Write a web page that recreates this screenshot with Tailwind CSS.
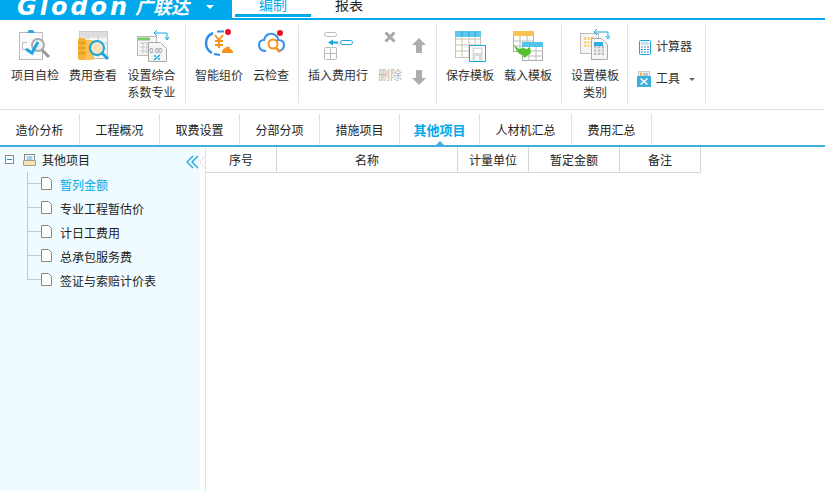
<!DOCTYPE html>
<html lang="zh">
<head>
  <meta charset="UTF-8" />
  <title>Glodon 广联达</title>
  <script src="https://cdn.jsdelivr.net/npm/@tailwindcss/browser@4"></script>
</head>
<body class="w-[825px] h-[491px] overflow-hidden bg-white flex flex-col text-[12px] text-[#333] font-['Liberation_Sans','Noto_Sans_CJK_SC',sans-serif]">

  <!-- Title bar -->
  <div class="h-[20px] shrink-0 flex overflow-hidden border-b-2 border-[#00a9ec]">
    <div class="w-[232px] h-[20px] shrink-0 bg-[#00a9ec] flex items-center text-white overflow-hidden">
      <span class="ml-[17px] w-[117px] font-['DejaVu_Sans'] font-bold italic text-[24px] leading-[14px] tracking-[3px] whitespace-nowrap mt-[-6px]">Glodon</span>
      <span class="ml-[1px] w-[59px] text-[18px] leading-[14px] font-bold italic whitespace-nowrap mt-[-5px]">广联达</span>
      <span class="ml-[12px] mt-[-7px] w-0 h-0 border-x-[4px] border-x-transparent border-t-[4px] border-t-white"></span>
    </div>
    <div class="ml-[3px] w-[76px] h-[17px] border-b-[3px] border-[#00a9ec] text-[#00a9ec] text-[14px] leading-[11px] text-center">编制</div>
    <div class="w-[76px] text-[14px] leading-[11px] text-center text-[#222]">报表</div>
  </div>

  <!-- Ribbon -->
  <div class="h-[90px] shrink-0 flex pl-[6px] pt-[5px] border-b border-[#e2e2e2] text-[#333] text-center leading-[17px]">
    <!-- group 1 -->
    <div class="w-[58px] flex flex-col items-center pt-[2px]">
      <svg class="w-[40px] h-[36px] mb-[5px]" viewBox="0 0 40 36" fill="none">
        <rect x="4.500" y="5.500" width="23" height="27" fill="#fbfbfb" stroke="#bbb"/>
        <path d="M12 6l2-3h4l2 3z" fill="#29a9e0"/>
        <path d="M12 15.500H7.500v7H11" stroke="#bbb"/>
        <circle cx="23" cy="18" r="6" fill="#f2f2f2" stroke="#aaa" stroke-width="2"/>
        <path d="M27 23l7 7" stroke="#999" stroke-width="3"/>
        <path d="M11 22l6 4 6-11" stroke="#1ea5e6" stroke-width="3"/>
      </svg>
      <span>项目自检</span>
    </div>
    <div class="w-[58px] flex flex-col items-center pt-[2px]">
      <svg class="w-[40px] h-[36px] mb-[5px]" viewBox="0 0 40 36" fill="none">
        <rect x="6.500" y="4.500" width="28" height="27" fill="#f7f7f7" stroke="#bbb"/>
        <path d="M6 10h29M6 16h29M6 22h29M15 5v27M25 5v27" stroke="#ccc"/>
        <rect x="6.500" y="4.500" width="28" height="5" fill="#ddd"/>
        <rect x="5" y="11" width="8" height="22" rx="2" fill="#f7b137"/>
        <rect x="12" y="13" width="9" height="20" rx="2" fill="#fbc253"/>
        <path d="M5 16h8M5 21h8M5 26h8" stroke="#d98a14"/>
        <circle cx="24" cy="21" r="7" fill="#fbe3bd" stroke="#16a6dd" stroke-width="2"/>
        <path d="M29 26l6 6" stroke="#16a6dd" stroke-width="3"/>
      </svg>
      <span>费用查看</span>
    </div>
    <div class="w-[59px] flex flex-col items-center pt-[2px]">
      <svg class="w-[40px] h-[36px] mb-[5px]" viewBox="0 0 40 36" fill="none">
        <rect x="5.500" y="9.500" width="19" height="19" fill="#f5f5f5" stroke="#bbb"/>
        <path d="M6 12h12" stroke="#7ec868" stroke-width="3"/>
        <path d="M8 16h10M8 20h10M8 24h10M11 15v12M15 15v12" stroke="#ccc"/>
        <path d="M16.500 15.500h12l6 6v13h-18z" fill="#f5f5f5" stroke="#aaa"/>
        <text x="17.500" y="26" font-size="6.500" fill="#777">0.00</text>
        <path d="M22 33l6-5" stroke="#16a6dd" stroke-width="1.500"/>
        <circle cx="23" cy="29" r="1" fill="#16a6dd"/><circle cx="27" cy="32" r="1" fill="#16a6dd"/>
        <path d="M23 6h12M35 6v6M25 3l-3 3 3 3M33 10l2 3 2-3" stroke="#16a6dd"/>
      </svg>
      <span>设置综合<br>系数专业</span>
    </div>
    <div class="w-[5px] h-[78px] border-r border-[#e2e2e2]"></div>
    <!-- group 2 -->
    <div class="w-[58px] ml-[4px] flex flex-col items-center pt-[2px]">
      <svg class="w-[40px] h-[36px] mb-[5px]" viewBox="0 0 40 36" fill="none">
        <path d="M14 6a11 11 0 0 0-1 20" stroke="#2d8fe6" stroke-width="2.500"/>
        <path d="M15 27l6 1" stroke="#2d8fe6" stroke-width="2"/>
        <path d="M18 4.500h7" stroke="#2d8fe6" stroke-width="2"/>
        <path d="M16 8l4 5 4-5M16 14h8M16 18h8M20 13v8" stroke="#f7941d" stroke-width="2"/>
        <circle cx="29" cy="5" r="3" fill="#ee1122"/>
        <path d="M23 26c0-4 2-4 3-5s5-3 5 1c2 0 3 2 3 4z" fill="#f7941d"/>
      </svg>
      <span>智能组价</span>
    </div>
    <div class="w-[46px] flex flex-col items-center pt-[2px]">
      <svg class="w-[40px] h-[36px] mb-[5px]" viewBox="0 0 40 36" fill="none">
        <g transform="translate(2 -1)">
          <path d="M13 25c-5 0-7-3-7-6s2-5 5-5c1-5 5-7 9-6 3 1 5 3 5 6 4 0 6 2 6 5s-2 6-6 6" stroke="#3d94ec" stroke-width="2.200"/>
          <circle cx="20" cy="18" r="4.500" fill="#fff" stroke="#f7941d" stroke-width="2"/>
          <path d="M23 22l4 4" stroke="#f7941d" stroke-width="2.500"/>
          <circle cx="27" cy="7" r="3" fill="#ee1122"/>
        </g>
      </svg>
      <span>云检查</span>
    </div>
    <div class="w-[5px] h-[78px] border-r border-[#e2e2e2]"></div>
    <!-- group 3 -->
    <div class="w-[70px] ml-[4px] flex flex-col items-center pt-[2px]">
      <svg class="w-[40px] h-[36px] mb-[5px]" viewBox="0 0 40 36" fill="none">
        <rect x="6.500" y="5.500" width="12" height="4" rx="2" stroke="#bbb"/>
        <rect x="22.500" y="13.500" width="12" height="4" rx="2" stroke="#16a6dd"/>
        <path d="M13 15.500h7" stroke="#16a6dd" stroke-width="2"/>
        <path d="M10 15.500l5-3v6z" fill="#16a6dd"/>
        <rect x="6.500" y="20.500" width="12" height="12" rx="1" stroke="#bbb"/>
        <path d="M6.500 26.500h12M12.500 20.500v12" stroke="#bbb"/>
      </svg>
      <span>插入费用行</span>
    </div>
    <div class="w-[34px] flex flex-col items-center pt-[2px] text-[#b5b5b5]">
      <svg class="w-[20px] h-[36px] mb-[5px]" viewBox="0 0 20 36" fill="none">
        <path d="M5.500 5.500l9 9M14.500 5.500l-9 9" stroke="#a8a8a8" stroke-width="3"/>
      </svg>
      <span>删除</span>
    </div>
    <div class="w-[23px] flex flex-col items-center gap-[16px] pt-[12px]">
      <svg class="w-[16px] h-[16px]" viewBox="0 0 16 16"><path d="M8 1l7 7h-4v8H5V8H1z" fill="#adadad"/></svg>
      <svg class="w-[16px] h-[16px]" viewBox="0 0 16 16"><path d="M8 16l7-7h-4V1H5v8H1z" fill="#adadad"/></svg>
    </div>
    <div class="w-[7px] h-[78px] border-r border-[#e2e2e2]"></div>
    <!-- group 4 -->
    <div class="w-[58px] ml-[4px] flex flex-col items-center pt-[2px]">
      <svg class="w-[40px] h-[36px] mb-[5px]" viewBox="0 0 40 36" fill="none">
        <rect x="5.500" y="4.500" width="25" height="26" fill="#fff" stroke="#cdbfae"/>
        <path d="M5 12h26M5 18h26M5 24h26M12 11v20M19 11v20M25 11v20" stroke="#cdbfae"/>
        <rect x="5" y="4" width="26" height="6" fill="#5ccaf0"/>
        <path d="M12 4v6M19 4v6M25 4v6" stroke="#2a9fd0"/>
        <rect x="19.500" y="18.500" width="16" height="16" fill="#fff" stroke="#14a7e0"/>
        <path d="M22.500 20.500h10v13h-10z" fill="#d9d9d9"/>
        <path d="M24 22h7v4h-7z" fill="#fff"/>
        <path d="M25 29h4v4h-4z" fill="#fff"/>
      </svg>
      <span>保存模板</span>
    </div>
    <div class="w-[58px] flex flex-col items-center pt-[2px]">
      <svg class="w-[40px] h-[36px] mb-[5px]" viewBox="0 0 40 36" fill="none">
        <rect x="5.500" y="4.500" width="20" height="20" fill="#fff" stroke="#aaa"/>
        <rect x="5" y="4" width="21" height="5" fill="#fbc253"/>
        <path d="M5 14h21M5 19h21M12 9v16M19 9v16" stroke="#bbb"/>
        <rect x="14.500" y="15.500" width="20" height="18" fill="#fff" stroke="#aaa"/>
        <rect x="14" y="15" width="21" height="5" fill="#52c3ee"/>
        <path d="M14 24h21M14 29h21M21 20v14M28 20v14" stroke="#bbb"/>
        <path d="M6 18l5 4 4-1 4 1 3-2 1 6-7 5-1-3c-4 0-7-4-9-10z" fill="#52c12c"/>
      </svg>
      <span>载入模板</span>
    </div>
    <div class="w-[5px] h-[78px] border-r border-[#e2e2e2]"></div>
    <!-- group 5 -->
    <div class="w-[58px] ml-[4px] flex flex-col items-center pt-[2px]">
      <svg class="w-[40px] h-[36px] mb-[5px]" viewBox="0 0 40 36" fill="none">
        <rect x="5.500" y="6.500" width="18" height="20" fill="#f5f5f5" stroke="#bbb"/>
        <rect x="9" y="10" width="9" height="10" fill="#fbd17a"/>
        <path d="M12 10v10M15 10v10M9 13.500h9M9 17h9" stroke="#fff"/>
        <path d="M16.500 11.500h10l6 6v15h-16z" fill="#f5f5f5" stroke="#aaa"/>
        <rect x="19" y="15" width="9" height="4" fill="#2ab0e6"/>
        <path d="M19 19h10v9H19z" fill="#bbb"/>
        <path d="M22 19v9M26 19v9M19 22h10M19 25h10" stroke="#fff"/>
        <path d="M20 5h13M33 5v5M22 2l-3 3 3 3M31 9l2 3 2-3" stroke="#16a6dd"/>
      </svg>
      <span>设置模板<br>类别</span>
    </div>
    <div class="w-[4px] h-[78px] border-r border-[#e2e2e2]"></div>
    <!-- group 6 -->
    <div class="w-[78px] flex flex-col pl-[9px] pt-[13px] gap-[14px] border-r border-[#e2e2e2] h-[78px] text-left">
      <div class="flex items-center h-[18px] gap-[5px] pl-[2px]">
        <svg class="w-[12px] h-[15px]" viewBox="0 0 12 15" fill="none">
          <rect x="0.500" y="0.500" width="11" height="14" rx="1" fill="#fff" stroke="#14a7e0"/>
          <rect x="2" y="2" width="8" height="3" fill="#bfe6f7"/>
          <path d="M2 7h2M5 7h2M2 9.500h2M5 9.500h2M2 12h2M5 12h2" stroke="#3b8fd0"/>
          <path d="M8 7h2" stroke="#ee3322"/>
          <path d="M8 9.500h2M8 12h2" stroke="#3b8fd0"/>
        </svg>
        <span>计算器</span>
      </div>
      <div class="flex items-center h-[18px] text-[#333]">
        <svg class="w-[14px] h-[16px]" viewBox="0 0 14 16" fill="none">
          <rect x="1.500" y="0.500" width="11" height="7" fill="#eee" stroke="#ccc"/>
          <path d="M3 1.500h2v5H3z" fill="#f2b84b"/>
          <path d="M6 3h5M6 5h5" stroke="#999"/>
          <rect y="5" width="14" height="11" fill="#3caee0"/>
          <path d="M3.500 7.500l7 6M10.500 7.500l-7 6" stroke="#fff" stroke-width="1.500"/>
        </svg>
        <span class="ml-[5px]">工具</span>
        <span class="ml-[9px] w-0 h-0 border-x-[3px] border-x-transparent border-t-[3px] border-t-[#666]"></span>
      </div>
    </div>
  </div>

  <!-- Sheet tabs -->
  <div class="h-[37px] shrink-0 flex pt-[4px] border-b-2 border-[#3fb0e0] text-[#222] text-center leading-[35px]">
    <div class="w-[80px] border-r border-[#e2e2e2]">造价分析</div>
    <div class="w-[80px] border-r border-[#e2e2e2]">工程概况</div>
    <div class="w-[80px] border-r border-[#e2e2e2]">取费设置</div>
    <div class="w-[80px] border-r border-[#e2e2e2]">分部分项</div>
    <div class="w-[80px] border-r border-[#e2e2e2]">措施项目</div>
    <div class="relative w-[80px] border-r border-[#e2e2e2] font-bold text-[13px] leading-[33px] text-[#00a9ec]">
      其他项目
      <span class="absolute left-[36px] bottom-0 w-0 h-0 border-x-[4px] border-x-transparent border-b-[4px] border-b-[#3fb0e0]"></span>
    </div>
    <div class="w-[92px] border-r border-[#e2e2e2]">人材机汇总</div>
    <div class="w-[80px] border-r border-[#e2e2e2]">费用汇总</div>
  </div>

  <!-- Body -->
  <div class="flex-1 flex min-h-0">
    <!-- Tree -->
    <div class="relative w-[206px] shrink-0 border-r border-[#e2e2e2] text-[#222]">
      <div class="w-[200px] h-full bg-[#effbfe]">
        <div class="h-[25px] flex items-center">
          <span class="ml-[5px] w-[9px] h-[9px] border border-[#888] flex items-center justify-center bg-white/60">
            <span class="w-[5px] h-px bg-[#1d8fc4]"></span>
          </span>
          <svg class="ml-[9px] w-[13px] h-[12px]" viewBox="0 0 13 12" fill="none">
            <rect x="1.500" y="0.500" width="10" height="8" fill="#fff" stroke="#888"/>
            <path d="M3.500 3h6M3.500 5h6" stroke="#4aa3d0"/>
            <path d="M0.500 6.500h12v5h-12z" fill="#f7e6b0" stroke="#a99"/>
          </svg>
          <span class="ml-[6px] mt-[3px]">其他项目</span>
        </div>
        <div class="pl-[27px]">
          <div class="flex h-[24px]">
            <span class="w-[14px] h-[24px] border-l border-[#c8c8c8]"><span class="block h-[12px] border-b border-[#c8c8c8]"></span></span>
            <svg class="mt-[5px] w-[11px] h-[13px]" viewBox="0 0 11 13" fill="none"><path d="M.5.500h7l3 3v9H.5z" fill="#fff" stroke="#888"/></svg>
            <span class="ml-[8px] leading-[28px] text-[#00a9ec]">暂列金额</span>
          </div>
          <div class="flex h-[24px]">
            <span class="w-[14px] h-[24px] border-l border-[#c8c8c8]"><span class="block h-[12px] border-b border-[#c8c8c8]"></span></span>
            <svg class="mt-[5px] w-[11px] h-[13px]" viewBox="0 0 11 13" fill="none"><path d="M.5.500h7l3 3v9H.5z" fill="#fff" stroke="#888"/></svg>
            <span class="ml-[8px] leading-[28px]">专业工程暂估价</span>
          </div>
          <div class="flex h-[24px]">
            <span class="w-[14px] h-[24px] border-l border-[#c8c8c8]"><span class="block h-[12px] border-b border-[#c8c8c8]"></span></span>
            <svg class="mt-[5px] w-[11px] h-[13px]" viewBox="0 0 11 13" fill="none"><path d="M.5.500h7l3 3v9H.5z" fill="#fff" stroke="#888"/></svg>
            <span class="ml-[8px] leading-[28px]">计日工费用</span>
          </div>
          <div class="flex h-[24px]">
            <span class="w-[14px] h-[24px] border-l border-[#c8c8c8]"><span class="block h-[12px] border-b border-[#c8c8c8]"></span></span>
            <svg class="mt-[5px] w-[11px] h-[13px]" viewBox="0 0 11 13" fill="none"><path d="M.5.500h7l3 3v9H.5z" fill="#fff" stroke="#888"/></svg>
            <span class="ml-[8px] leading-[28px]">总承包服务费</span>
          </div>
          <div class="flex h-[24px]">
            <span class="w-[14px] h-[12px] border-l border-b border-[#c8c8c8]"></span>
            <svg class="mt-[5px] w-[11px] h-[13px]" viewBox="0 0 11 13" fill="none"><path d="M.5.500h7l3 3v9H.5z" fill="#fff" stroke="#888"/></svg>
            <span class="ml-[8px] leading-[28px]">签证与索赔计价表</span>
          </div>
        </div>
      </div>
      <!-- collapse handle -->
      <svg class="absolute left-[186px] top-[8px] w-[19px] h-[14px]" viewBox="0 0 19 14" fill="none">
        <path d="M7 1L1 7l6 6M12 1L6 7l6 6" stroke="#19a6dc" stroke-width="1.300"/>
        <path d="M19 1l-5 6 5 6" stroke="#dcdcdc"/>
      </svg>
    </div>
    <!-- Grid -->
    <div class="flex-1">
      <div class="w-[495px] h-[26px] flex border-b border-r border-[#d8d8d8] text-[#222] text-center leading-[28px]">
        <div class="w-[71px] border-r border-[#d8d8d8]">序号</div>
        <div class="w-[181px] border-r border-[#d8d8d8]">名称</div>
        <div class="w-[71px] border-r border-[#d8d8d8]">计量单位</div>
        <div class="w-[91px] border-r border-[#d8d8d8]">暂定金额</div>
        <div class="flex-1">备注</div>
      </div>
    </div>
  </div>
</body>
</html>
